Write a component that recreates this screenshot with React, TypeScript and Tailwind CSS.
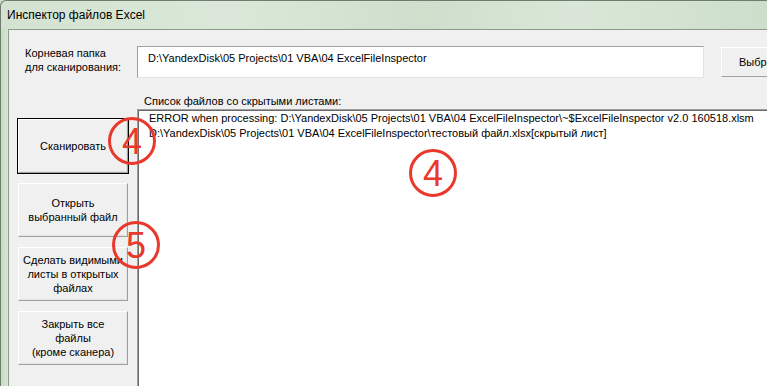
import React from 'react'

const font = { fontFamily: '"Liberation Sans", Arial, sans-serif' }

function Marker({ digit }: { digit: string }) {
  return (
    <svg width="50" height="50" viewBox="0 0 50 50" className="block">
      <circle cx="25" cy="25" r="22.5" fill="none" stroke="#e8392c" strokeWidth="3" />
      <text
        x="25"
        y="38"
        textAnchor="middle"
        fontSize="36"
        fill="#e8392c"
        fontFamily='"Liberation Sans", Arial, sans-serif'
      >
        {digit}
      </text>
    </svg>
  )
}

function FormButton({
  lines,
  isDefault = false,
}: {
  lines: string[]
  isDefault?: boolean
}) {
  return (
    <div
      className={`h-[56px] w-[112px] ${
        isDefault ? 'border border-black' : 'border border-transparent'
      }`}
    >
      <div className="flex h-full w-full flex-col items-center justify-center border-t border-l border-white border-r border-b border-r-[#a0a0a0] border-b-[#a0a0a0] bg-[#f0f0f0] shadow-[inset_-1px_-1px_0_#e3e3e3] text-center text-[11px] leading-[14px] text-black">
        {lines.map((l) => (
          <span key={l} className="whitespace-nowrap">
            {l}
          </span>
        ))}
      </div>
    </div>
  )
}

export default function App() {
  return (
    <div
      className="relative h-[386px] w-[767px] overflow-hidden bg-[#cfdfcc]"
      style={font}
    >
      {/* Title bar */}
      <div className="flex h-[29px] items-center rounded-tl-[6px] border-t border-l border-[#6f7d6e] bg-[linear-gradient(90deg,#d3e2d1_0%,#dbe8d9_30%,#cfdfcc_55%,#dae7d8_75%,#cddecb_100%)] pl-[6px]">
        <span className="text-[12px] text-black">Инспектор файлов Excel</span>
      </div>

      {/* Body */}
      <div className="flex h-[357px]">
        <div className="w-[8px] shrink-0 border-l border-[#6f7d6e] bg-[linear-gradient(90deg,#c9dbc6,#d6e5d4)]" />
        <div className="flex min-w-0 flex-1 border-t border-l border-[#8d9a8c] bg-[#f0f0f0] pl-[8px] pt-[16px]">
          {/* Left column */}
          <div className="flex w-[112px] shrink-0 flex-col">
            <div className="pl-[8px] text-[11px] leading-[14px] text-black">
              Корневая папка
              <br />
              для сканирования:
            </div>
            <div className="mt-[44px] flex flex-col gap-[8px]">
              <FormButton lines={['Сканировать']} isDefault />
              <FormButton lines={['Открыть', 'выбранный файл']} />
              <FormButton lines={['Сделать видимыми', 'листы в открытых', 'файлах']} />
              <FormButton lines={['Закрыть все', 'файлы', '(кроме сканера)']} />
            </div>
          </div>

          {/* Right column */}
          <div className="ml-[8px] flex w-[660px] shrink-0 flex-col">
            <div className="flex items-start gap-[17px]">
              <div className="flex h-[32px] w-[567px] shrink-0 items-start border-t border-l border-[#a0a0a0] border-r border-b border-r-[#e3e3e3] border-b-[#e3e3e3] bg-white pl-[10px] pt-[4px] text-[11px] leading-[14px] text-black">
                D:\YandexDisk\05 Projects\01 VBA\04 ExcelFileInspector
              </div>
              <div className="mt-[1px] flex h-[30px] w-[80px] shrink-0 items-center border-t border-l border-white border-r border-b border-r-[#a0a0a0] border-b-[#a0a0a0] bg-[#f0f0f0] pl-[17px] text-[11px] text-black">
                Выбрать
              </div>
            </div>
            <div className="mt-[16px] pl-[7px] text-[11px] leading-[15px] text-black">
              Список файлов со скрытыми листами:
            </div>
            <div className="flex-1 border-t border-l border-[#a0a0a0] bg-white pl-[11px] pt-[1px] shadow-[inset_1px_1px_0_#696969] text-[11px] leading-[15px] text-black">
              <div className="whitespace-nowrap">
                ERROR when processing: D:\YandexDisk\05 Projects\01 VBA\04 ExcelFileInspector\~$ExcelFileInspector v2.0 160518.xlsm
              </div>
              <div className="whitespace-nowrap">
                D:\YandexDisk\05 Projects\01 VBA\04 ExcelFileInspector\тестовый файл.xlsx[скрытый лист]
              </div>
            </div>
          </div>
        </div>
      </div>

      {/* Annotation markers */}
      <div className="absolute left-[107px] top-[116px]">
        <Marker digit="4" />
      </div>
      <div className="absolute left-[111px] top-[220px]">
        <Marker digit="5" />
      </div>
      <div className="absolute left-[408px] top-[148px]">
        <Marker digit="4" />
      </div>
    </div>
  )
}
